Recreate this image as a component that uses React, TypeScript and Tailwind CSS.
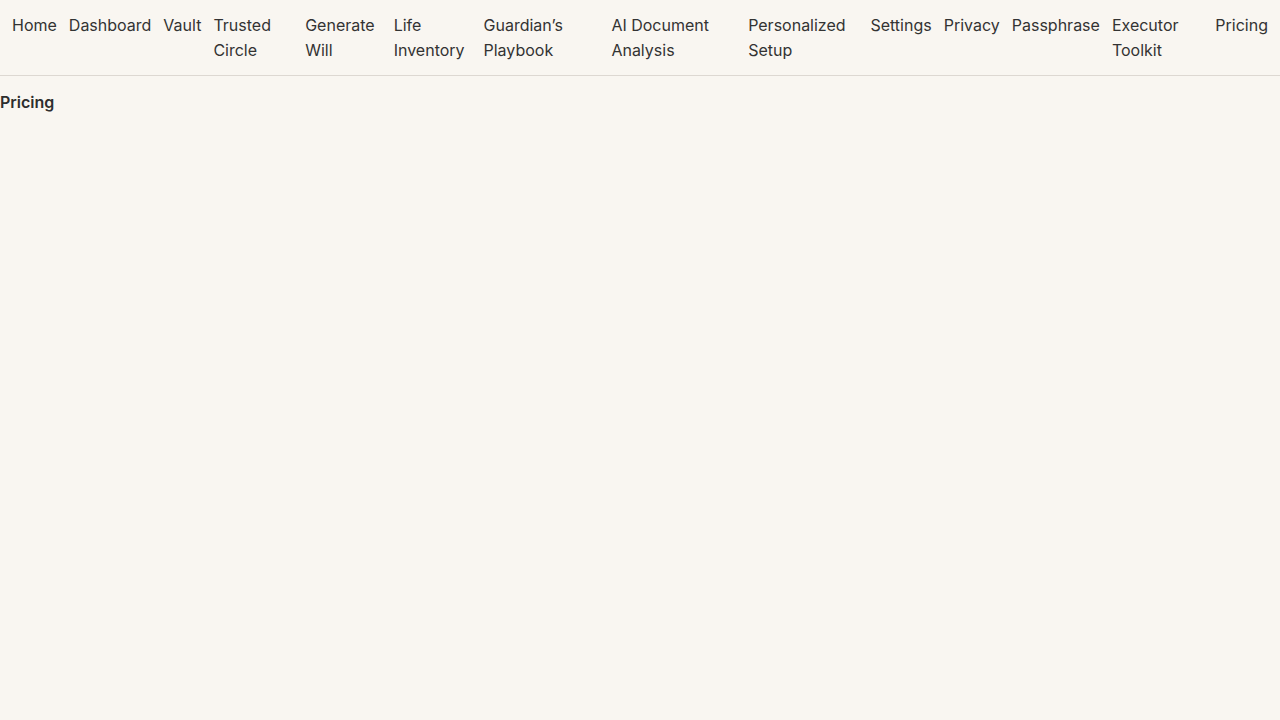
const links = [
  "Home",
  "Dashboard",
  "Vault",
  "Trusted Circle",
  "Generate Will",
  "Life Inventory",
  "Guardian’s Playbook",
  "AI Document Analysis",
  "Personalized Setup",
  "Settings",
  "Privacy",
  "Passphrase",
  "Executor Toolkit",
  "Pricing",
];

export default function App() {
  return (
    <div className="min-h-screen bg-[#f9f6f1] text-[#2e2e2e] font-['Inter',sans-serif]">
      <nav className="flex gap-3 px-3 pt-[13px] pb-3 border-b border-[#ddd8d2] text-base leading-[25px]">
        {links.map((link) => (
          <a key={link} href="#" className="text-[#333333]">
            {link}
          </a>
        ))}
      </nav>
      <div className="pt-[14px] font-semibold text-base leading-[25px]">Pricing</div>
    </div>
  );
}
